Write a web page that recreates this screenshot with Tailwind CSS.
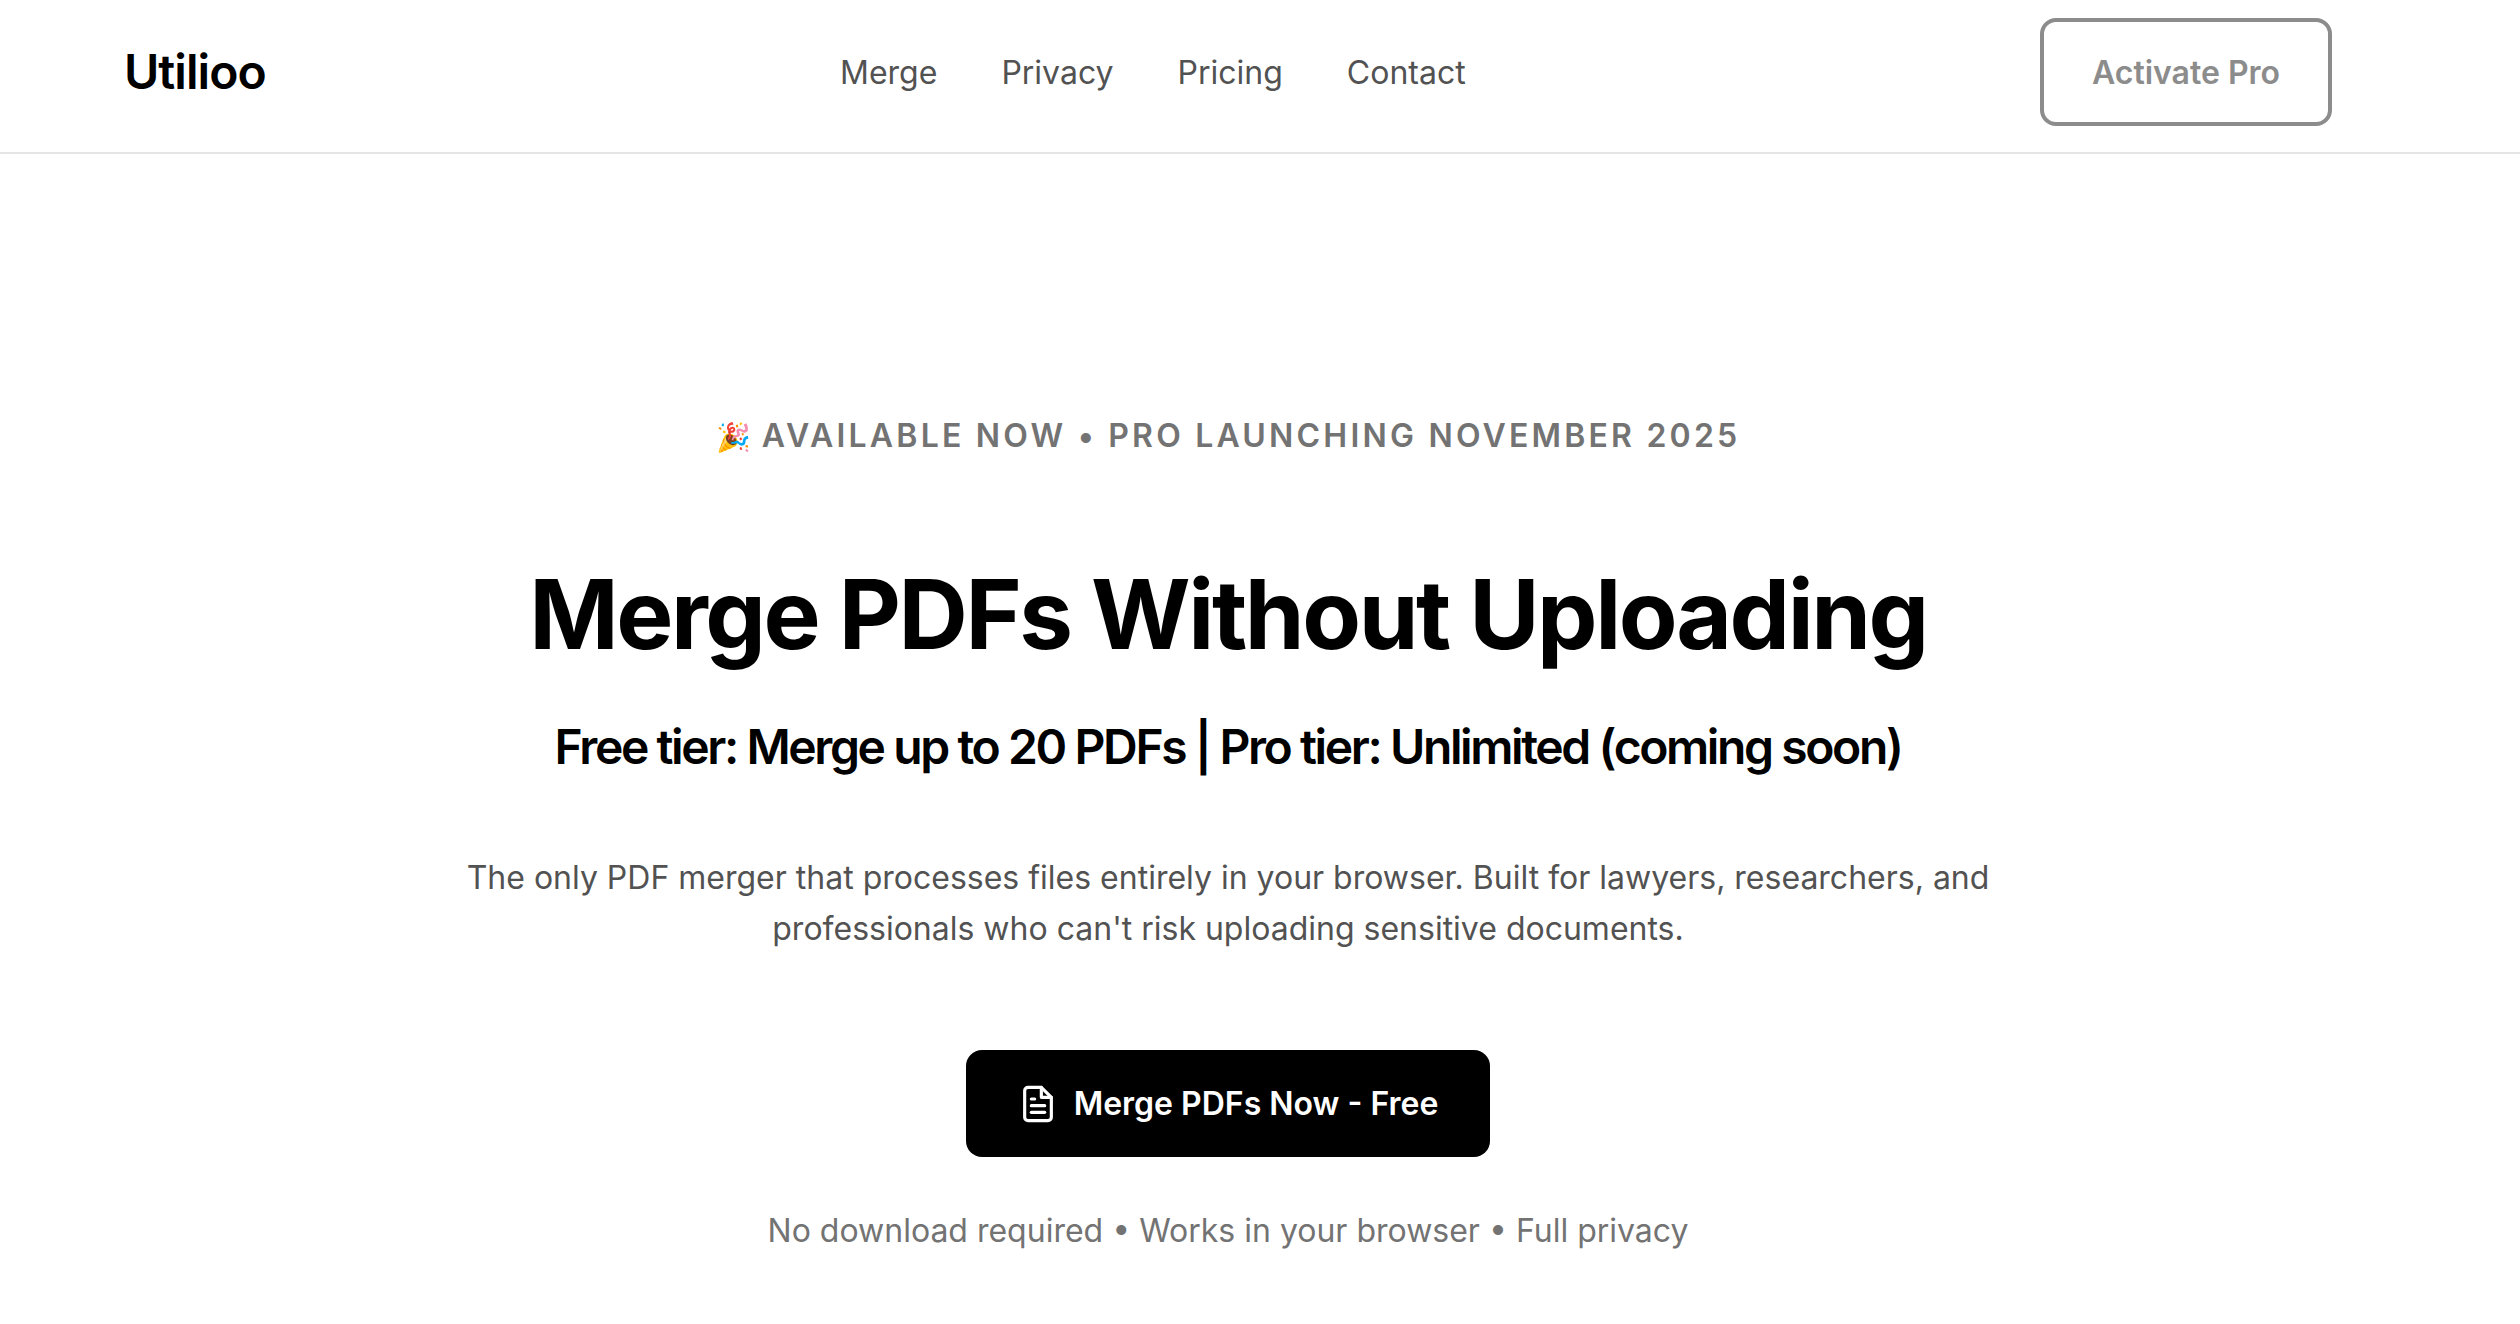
<!DOCTYPE html>
<html lang="en">
<head>
    <meta charset="UTF-8">
    <meta name="viewport" content="width=device-width, initial-scale=1.0">
    <title>Utilioo - Merge PDFs</title>
    <script src="https://cdn.jsdelivr.net/npm/@tailwindcss/browser@4"></script>
</head>
<body class="bg-white text-black font-['Inter',sans-serif] h-[1324px] overflow-hidden">
    <header class="h-[154px] border-b-2 border-[#e5e5e5] pl-[124px] pr-[188px] pb-[8px] flex items-center justify-between">
        <div class="text-[48px] font-semibold tracking-[-0.96px]">Utilioo</div>
        <nav class="flex gap-[64px] pt-[2px] text-[32px] text-[#525252]">
            <a>Merge</a>
            <a>Privacy</a>
            <a>Pricing</a>
            <a>Contact</a>
        </nav>
        <button class="w-[292px] h-[108px] pt-[2px] border-4 border-[#8c8c8c] rounded-[16px] text-[32px] font-semibold text-[#8c8c8c]">Activate Pro</button>
    </header>

    <!-- hero sits 32px left of page centre -->
    <main class="flex flex-col items-center text-center pt-[258px] pr-[64px]">
        <p class="h-[48px] text-[32px] font-semibold tracking-[3.2px] text-[#737373]"><span class="text-[28px] leading-none tracking-[0px]">🎉</span> AVAILABLE NOW • PRO LAUNCHING NOVEMBER 2025</p>
        <h1 class="mt-[97px] text-[96px] leading-[1.2] font-bold tracking-[-2.4px] whitespace-nowrap">Merge PDFs Without Uploading</h1>
        <h2 class="mt-[39px] text-[48px] font-semibold tracking-[-2.4px]">Free tier: Merge up to 20 PDFs | Pro tier: Unlimited (coming soon)</h2>
        <p class="mt-[69px] w-[1600px] text-[32px] leading-[51px] text-[#525252]">The only PDF merger that processes files entirely in your browser. Built for lawyers, researchers, and<br>professionals who can't risk uploading sensitive documents.</p>
        <button class="mt-[96px] w-[524px] h-[107px] bg-black text-white rounded-[16px] flex items-center justify-center gap-[16px] text-[32px] font-semibold">
            <svg class="w-[40px] h-[40px]" viewBox="0 0 24 24" fill="none" stroke="currentColor" stroke-width="1.9" stroke-linecap="round" stroke-linejoin="round"><path d="M14 2H6a2 2 0 0 0-2 2v16a2 2 0 0 0 2 2h12a2 2 0 0 0 2-2V8z"/><path d="M14 2v6h6"/><path d="M16 13H8"/><path d="M16 17H8"/><path d="M10 9H8"/></svg>
            Merge PDFs Now - Free
        </button>
        <p class="mt-[50px] text-[32px] text-[#737373]">No download required • Works in your browser • Full privacy</p>
    </main>
</body>
</html>
